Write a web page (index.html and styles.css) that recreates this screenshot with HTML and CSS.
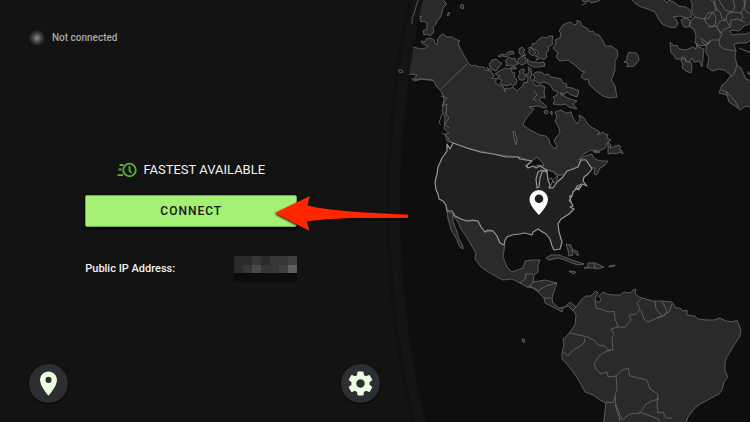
FILE: index.html
```html
<!DOCTYPE html>
<html lang="en">

<head>
    <meta charset="UTF-8">
    <meta name="viewport" content="width=device-width, initial-scale=1.0">
    <title>VPN - Not connected</title>
    <link rel="stylesheet" href="styles.css">
</head>

<body>
    <svg class="map" viewBox="0 0 750 422" preserveAspectRatio="xMaxYMid slice" role="img" aria-label="World map">
        <defs>
            <clipPath id="globe-clip">
                <circle cx="1330" cy="205" r="930" />
            </clipPath>
        </defs>
        <circle class="globe-shadow" cx="1330" cy="205" r="944" />
        <circle class="globe-ring" cx="1330" cy="205" r="940" />
        <circle class="globe-sea" cx="1330" cy="205" r="930" />
        <path class="coast" d="M412 24V20L418 0M398 70l4 0 1 2-3 1z" />

        <g class="land" clip-path="url(#globe-clip)">
            <!-- Siberia -->
            <path d="M400-5H447L444 1L447 4L443 8L442 13L440 18L437 21L436 24L433 27L434 32L430 36L427 34L424 35L423 31L427 29L427 23L424 21L421 22L420 18L422 17L400 10Z" />
            <path d="M447 15l2-3 1 1-2 3zM460 6l2-2 2 2-1 3-2-1z" />
            <!-- Canada and Alaska -->
            <path d="M400 48L414 47L420 49L426 48L428 46L425 45L422 43L421 41L425 42L426 39L431 38L434 40L435 43L437 45L438 42L437 40L440 36L443 34L447 37L452 37L455 39L460 41L458 43L460 48L462 52L465 57L468 63L472 66L475 65L479 67L484 67L486 70L489 71L487 67L491 71L494 76L492 78L497 79L495 82L500 86L503 86L505 92L505 88L509 89L513 87L517 91L520 88L523 86L524 82L527 83L528 78L526 75L529 72L528 67L531 69L532 75L530 78L533 82L536 86L541 85L545 87L544 92L545 98L541 97L539 100L543 103L547 107L544 108L538 106L529 107L534 109L529 115L525 120L523 125L530 130L540 135L546 136L549 139L550 144L555 149L557 146L554 141L556 137L560 133L559 128L555 121L557 117L555 112L561 110L566 113L571 112L573 118L577 124L580 120L579 115L584 118L588 124L591 127L595 129L600 132L597 135L603 132L606 135L608 134L607 138L611 140L607 143L605 148L600 151L591 150L584 154L579 160L585 156L592 154L593 157L597 160L603 161L608 161L604 166L600 168L597 175L594 174L595 168L592 168L586 160L581 160L578 167L567 171L563 177L555 173L547 172L543 170L532 161L518 157L493 154L467 148L453 143L447 141L445 134L449 133L444 129L445 117L442 111L444 98L441 91L436 86L434 81L431 80L425 79L420 79L413 80L417 75L400 73Z" />
            <path class="borders" d="M467 64L441 89M411 78l4 3 6-2 7 1 5 0M441 96l6 2-5 8 5-2-1 10 3 4-4 6 4 4M442 114l-3 9 2 2M442 133l5 3 3 5 3 2M534 91l3 4-4 4 4 2" />
            <path d="M513 131l2 1 2 8-1 5-2-6z" />
            <path d="M489 64L492 60L496 59L499 62L502 63L499 67L496 71L491 69Z" />
            <path d="M495 74L499 71L502 70L505 68L508 69L510 68L512 72L515 73L514 77L517 80L516 84L513 86L511 84L508 86L505 85L500 84L502 80L497 78L500 76Z" />
            <path d="M498 56l4-2 3 1 3-3 5-1 1 3-4 0-3 3-5-1-3 1zM505 61l4-4 3 2 3-1 1 4 2 2-4 2-3-1-5 1 1-3zM519 49l3-2 3 3-2 2 3 3-3 1-4-3zM518 59l4-3 4 2 0 5-4 2-4-2zM511 67l5 0 0 2-5 0z" />
            <path d="M519 71l3-2 3 1-2 3 3 2-2 5-4 0-2-3 2-3z" />
            <path d="M527 59l4 3 5 0 2 1 6-1 1 4-5 1-7 0-5-3zM529 47l4 2 3 4-3 3-4-3z" />
            <path d="M531 48L533 43L535 44L538 40L542 37L547 38L549 36L553 36L552 41L553 44L548 47L549 50L546 53L547 57L544 60L541 58L536 60L538 57L535 56L539 53L536 50Z" />
            <path d="M533 80L535 77L533 75L536 72L541 72L545 75L548 74L551 77L557 78L561 79L563 83L567 84L566 87L572 88L579 91L577 97L571 95L567 92L562 95L570 99L577 101L573 104L577 109L569 107L565 104L560 105L553 104L555 100L553 97L557 95L558 92L553 90L551 86L547 83L543 82L539 84L537 82Z" />
            <path d="M544 111l3-1 1 3-3 1zM550 112l2-1 0 4zM560 93l3 0 1 2-3 0z" />
            <path d="M608 142l3 3-1 3 5-2 4-1 2 2-2 2 3 2 1 3-4-2-3 2-3-1-5 1zM593 151l7 1-5 1z" />
            <!-- Greenland and Iceland -->
            <path d="M553 48L556 44L555 40L560 38L561 33L559 31L563 25L567 23L571 22L574 25L577 24L577 20L581 22L581 25L588 29L590 32L593 31L595 34L599 35L603 41L605 46L611 46L617 50L618 56L615 61L615 70L613 76L611 80L615 86L617 97L609 98L603 96L596 91L589 84L588 79L585 80L581 77L583 73L585 72L581 71L577 67L568 60L560 61L556 57L558 53Z" />
            <path d="M624 62l3-2 0-3 2-5 4 1 2-1 3 3 1 5-3 4-3 3-3-1-3 1 1-4z" />
            <!-- Mexico and Central America -->
            <path d="M447 211L448 219L450 225L451 230L456 238L460 247L463 249L463 246L459 239L456 229L453 222L453 215L458 222L461 229L466 236L470 243L476 253L475 259L481 267L490 273L497 277L503 280L512 279L520 283L527 287L533 288L538 292L544 298L545 303L551 306L555 308L562 312L563 308L568 306L573 311L576 307L570 302L565 307L559 308L553 303L552 298L555 288L557 283L545 280L533 282L534 275L538 272L538 265L540 260L532 260L525 261L523 268L512 272L507 267L503 257L504 250L505 245L493 231L485 232L478 221L467 221Z" />
            <path class="borders" d="M520 283l6-5-1-4 8 0M527 287l4-2 2-3M538 291l8-5 11-3M530 286l9 5M544 298l7 0" />
            <path d="M546 258L551 255L559 255L567 258L575 261L584 264L578 265L572 263L565 260L558 258L549 260ZM584 268l4-1 0-4 7 0 9 4-7 2-4-1-8 0zM609 266l6-1 0 1-6 1zM569 271l7 1-3 2zM566 244l2 6 1 6 4-1-1-5 6 6 0-4-6-3-1-4z" />
            <path class="borders" d="M594 263l1 5" />
            <path d="M522 339l2 0 1 3-2 0z" />
            <!-- South America -->
            <path d="M573 310L577 306L581 300L586 296L591 296L596 291L598 293L595 299L598 303L601 300L599 296L603 292L607 294L614 295L620 295L624 292L630 293L633 290L636 289L635 293L639 297L646 299L653 301L661 301L672 302L676 308L680 308L683 311L687 310L687 315L695 316L698 319L707 320L714 320L720 318L726 321L732 322L737 320L741 330L740 336L733 347L727 357L725 362L725 371L728 377L724 382L722 390L719 394L713 397L706 401L700 404L694 409L688 417L685 426H603L606 403L600 400L593 395L585 392L582 386L576 376L571 369L566 363L562 359L562 353L564 345L563 339L567 336L570 332L575 325L576 315Z" />
            <path class="borders" d="M595 300l1 8 7 2 6 2 5-1 1 8 3 8 7 0 6-7-2-5 7-1 4-5-3-6 4-4M641 310l3 9 4 3 9-4 5-2-6-7-1-8M657 318l7-2 3-5-5-10M663 315l6-3 3-8M618 327l-7 2 3 5-2 4 1 12-5 1-3-5-7-1-3-4-7-4-9-2-9-2M585 338l-1 5-5 4-6 3-5 6-5-4M611 349l-6 3-6 4-5 8 2 5 5 5 6-2 1 5 8-1 5-5 7-3 2 8 13 3 4 1 3 9 8 5-1 10 1 9 5-1 3 6 6 0M616 376l1 12-2 8 1 10 3 6 3 8 8-6 10-1 6-9 6-3 7-2M639 412l9 3 10 4 3 7M606 402l7 1 2-6M615 404l5 16-2 4" />
            <!-- Europe -->
            <path d="M580-2l4 4 5-1 2 2 8-2 2-4zM582 5l5-2" />
            <path d="M630-2L636 4L641 7L648 9L655 12L658 18L662 24L669 27L675 28L678 24L676 19L673 17L680 16L686 18L692 17L690 10L686 7L679 6L674 2L669 0L667 3L662-2Z" />
            <path d="M681 20l4-2 5 2-1 7-5 0-2-4z" />
            <path d="M690-2L692 4L692 13L695 17L691 20L690 27L694 29L696 36L695 43L699 46L707 45L711 41L706 46L706 52L709 58L707 67L712 71L719 69L724 70L731 75L726 82L722 85L719 93L727 95L729 102L735 106L740 110L746 106L754 108V82L746 79L741 68L737 65L735 57L736 51L734 44L740 43L747 43L754 36V29L747 34L740 34L732 35L730 31L733 30L739 31L744 26L754 22V-2Z" />
            <path class="borders" d="M695 17l8 2 6-1 2-4 5-4-2-6 1-6M705 18l3-5 5-1 3 6-1 7-4 2-5-4-2-5M716 9l4 3 2 6 4 2 1-6 6-2 8 1 4-8 1-6M711 0l4 3 2 7M719 0l6 10 7 2 3-5-2-9M726 20l-6 1-3 5 3 7 5-4 5-2-4-7M730 27l1-7 6-1 8 3M741 12l2 5-2 3M744 0l1 10 5 4M722 33l-3 7 1 6 4 3 11 2M719 40l-8 0-3 3-8-5M708 27l8-1 3 5 3 2M727 96l0-4 8 9 4 7M722 90l5 2M737 65l-3 9-3 3M701 41l4 4 6-4" />
            <path d="M670 42l4 4 3-1 2 4 7 1 7-3 3 2 1-6 1 4 6 2-1 9-1 9-3-6-5 1-2-4-3 4-5-3-8 0-3-5-2-1zM682 57l3 1 1 4 5 0 1 6-1 5-5-2-4-3 1-4-2-3z" />
            <path d="M739 48l9 4 5 0M748 72l3 0 0 3-3-1z" />
        </g>

        <!-- Great Lakes -->
        <path class="lake" d="M527 166l6-6 4-3 5 5 2 4-6-1-5 2-4 1zM537 188l-1-9 2-7 4-3-1 6-1 9-1 4zM545 169l9 3 4 6-4 5-3-5-4 2zM550 188l3-8 6-5 6 0-4 5-6 7z" />
        <!-- USA, highlighted as the current region -->
        <path class="country" d="M447 144L450 149L453 143L467 148L480 152L493 154L506 157L518 157L520 159L532 161L526 166L528 168L533 166L536 168L540 166L545 169L547 173L547 170L542 172L540 178L539 187L537 188L536 179L538 172L542 170L547 172L548 180L550 185L549 188L553 188L557 182L563 177L567 171L573 169L578 167L581 160L586 160L592 169L588 174L584 177L583 181L587 186L582 184L577 186L575 190L573 192L572 196L570 198L571 202L573 206L570 207L574 209L569 214L561 219L558 224L559 232L562 242L560 249L554 250L552 246L550 239L546 234L541 231L538 229L533 232L532 235L525 233L519 234L512 235L507 237L505 240L504 245L500 243L497 236L493 231L488 230L485 232L481 227L478 221L473 220L467 221L461 219L455 216L452 211L447 211L446 205L443 201L439 199L438 194L436 190L435 182L437 174L438 167L442 158L447 151Z" />
        <path class="bay" d="M576 189l6-4-3 5zM569 196l3 0-3 5 3 2" />

        <path class="map-pin" fill-rule="evenodd" d="M539 190a9.500 9.500 0 0 0-9.500 9.500c0 6.500 9.500 15.500 9.500 15.500s9-9 9-15.500a9.300 9.500 0 0 0-9-9.500zm0 4.500a4.300 4.300 0 1 1 0 8.600a4.300 4.300 0 0 1 0-8.600z" />
    </svg>

    <main class="panel">
        <p class="status"><span class="status-dot"></span>Not connected</p>

        <section class="connection">
            <h1 class="location">
                <svg class="fastest-icon" viewBox="0 0 20 16" aria-hidden="true">
                    <circle cx="12.500" cy="8" r="6.300" />
                    <path d="M12.500 4v4.500l2 2.500M2.500 3h4M1.500 7.500h3M.5 13.200h5.500" />
                </svg>
                FASTEST AVAILABLE
            </h1>
            <div class="connect">
                <button type="button" class="connect-button">CONNECT</button>
                <svg class="arrow" viewBox="0 0 134 36" aria-hidden="true">
                    <path d="M0 18L35 1L32.500 10.500C55 16 95 18 132.500 19.500Q134 21.500 132.500 23C95 23 60 22 32 26.500L34.500 36Z" />
                </svg>
            </div>
            <div class="ip">
                <span>Public IP Address:</span>
                <svg class="ip-mask" viewBox="0 0 7 3" preserveAspectRatio="none" shape-rendering="crispEdges" role="img" aria-label="Hidden">
                    <path fill="#2b2b2b" d="M0 0h7v2H0z" />
                    <path fill="#363636" d="M1 1h1v1H1zM2 0h1v1H2zM4 0h2v1H4zM3 1h2v1H3z" />
                    <path fill="#404040" d="M5 1h1v1H5zM6 0h1v1H6z" />
                    <path fill="#4a4a4a" d="M2 1h1v1H2z" />
                    <path fill="#5e5e5e" d="M6 1h1v1H6z" />
                    <path fill="#0c0c0c" d="M0 2h7v1H0z" />
                </svg>
            </div>
        </section>

        <nav class="actions">
            <button type="button" class="round-button" aria-label="Locations">
                <svg viewBox="0 0 24 24"><path d="M12 2C8.130 2 5 5.130 5 9c0 5.250 7 13 7 13s7-7.750 7-13c0-3.870-3.130-7-7-7zm0 9.500a2.500 2.500 0 0 1 0-5 2.500 2.500 0 0 1 0 5z" /></svg>
            </button>
            <button type="button" class="round-button" aria-label="Settings">
                <svg viewBox="0 0 24 24"><path d="M19.430 12.980c.04-.32.07-.64.07-.98s-.03-.66-.07-.98l2.110-1.650c.19-.15.24-.42.12-.64l-2-3.460c-.12-.22-.39-.3-.61-.22l-2.490 1c-.52-.4-1.080-.73-1.690-.98l-.38-2.650C14.460 2.180 14.250 2 14 2h-4c-.25 0-.46.18-.49.42l-.38 2.650c-.61.25-1.170.59-1.690.98l-2.490-1c-.23-.09-.49 0-.61.22l-2 3.460c-.13.22-.07.49.12.64l2.110 1.650c-.04.32-.07.65-.07.98s.03.66.07.98l-2.110 1.650c-.19.15-.24.42-.12.64l2 3.460c.12.22.39.3.61.22l2.490-1c.52.4 1.080.73 1.690.98l.38 2.650c.03.24.24.42.49.42h4c.25 0 .46-.18.49-.42l.38-2.650c.61-.25 1.170-.59 1.690-.98l2.490 1c.23.09.49 0 .61-.22l2-3.460c.12-.22.07-.49-.12-.64l-2.110-1.650zM12 15.500c-1.930 0-3.500-1.570-3.500-3.500s1.570-3.500 3.500-3.500 3.500 1.570 3.500 3.500-1.570 3.500-3.500 3.500z" /></svg>
            </button>
        </nav>
    </main>
</body>

</html>
```
FILE: styles.css
```css
/* Global Styles */
* {
    box-sizing: border-box;
}

body {
    margin: 0;
    min-height: 100vh;
    background-color: #131313;
    color: #f2f2f2;
    font-family: Roboto, sans-serif;
    font-size: 11px;
    overflow: hidden;
}

/* Map, sits behind the panel */
.map {
    position: absolute;
    top: 0;
    left: 0;
    width: 100%;
    height: 100%;
}

.globe-shadow {
    fill: #101010;
}

.globe-ring {
    fill: #141414;
}

.globe-sea {
    fill: #0e0e0e;
}

.land,
.coast {
    fill: #2a2a2a;
    stroke: #6a6a6a;
    stroke-width: 0.8;
    stroke-linejoin: round;
}

.borders,
.coast {
    fill: none;
}

.lake {
    fill: #0e0e0e;
    stroke: #777777;
    stroke-width: 0.8;
}

.country {
    fill: #202020;
    stroke: #989898;
    stroke-width: 1.2;
    stroke-linejoin: round;
}

.bay {
    fill: #777777;
    stroke: #989898;
}

.map-pin {
    fill: #ffffff;
}

/* Left Panel */
.panel {
    position: relative;
    display: flex;
    flex-direction: column;
    justify-content: space-between;
    width: 51%;
    min-height: 100vh;
    padding: 30px 0 19px;
}

.status {
    display: flex;
    align-items: center;
    gap: 7px;
    margin: 0;
    padding-left: 29px;
    font-size: 10px;
    line-height: 16px;
    font-weight: 500;
    color: #a8a8a8;
}

.status-dot {
    width: 16px;
    height: 16px;
    border-radius: 50%;
    background: radial-gradient(circle, #8c8c8c 0%, #4a4a4a 35%, #2a2a2a 55%, #131313 75%);
}

/* Connection */
.connection {
    width: 212px;
    margin: 32px auto 0;
}

.location {
    display: flex;
    align-items: center;
    justify-content: center;
    gap: 6px;
    margin: 0 0 16px;
    font-size: 13px;
    line-height: 18px;
    font-weight: 400;
}

.fastest-icon {
    width: 20px;
    height: 16px;
    fill: none;
    stroke: #5fae3c;
    stroke-width: 1.8;
}

.connect {
    position: relative;
}

.connect-button {
    display: block;
    width: 100%;
    height: 32px;
    border: 1px solid #6fb04a;
    border-radius: 2px;
    background-color: #a4f074;
    box-shadow: 0 2px 3px #000000;
    color: #151515;
    font-family: inherit;
    font-size: 12px;
    font-weight: 500;
    letter-spacing: 1px;
}

.arrow {
    position: absolute;
    top: 0;
    left: 190px;
    width: 134px;
    height: 36px;
    fill: #ff2600;
    filter: drop-shadow(0 1px 1px #000000);
}

.ip {
    display: flex;
    align-items: center;
    justify-content: space-between;
    margin-top: 29px;
    font-weight: 500;
}

.ip-mask {
    width: 63px;
    height: 26px;
}

/* Bottom Buttons */
.actions {
    display: flex;
    justify-content: space-between;
    padding: 0 3px 0 29px;
}

.round-button {
    display: flex;
    align-items: center;
    justify-content: center;
    width: 39px;
    height: 39px;
    padding: 0;
    border: none;
    border-radius: 50%;
    background-color: #2d2e32;
    box-shadow: 0 1px 2px #000000;
}

.round-button svg {
    width: 29px;
    height: 29px;
    fill: #eaffe0;
}
```
